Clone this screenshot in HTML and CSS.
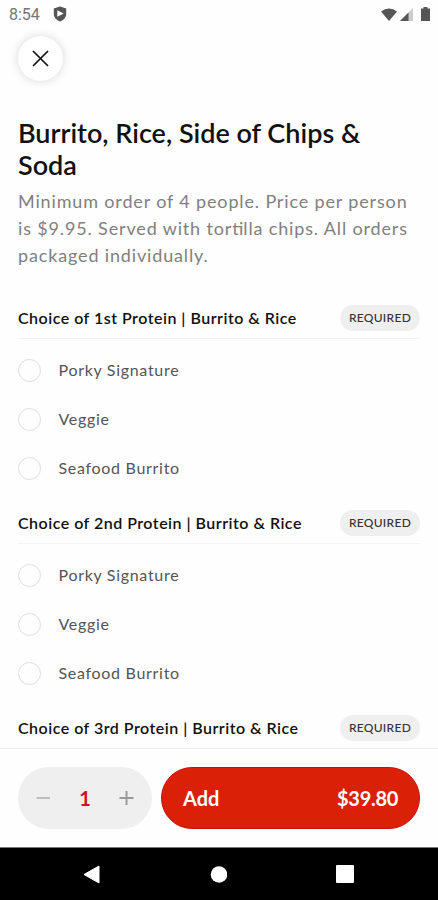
FILE: index.html
```html
<!DOCTYPE html>
<html lang="en">
<head>
<meta charset="utf-8">
<title>Burrito, Rice, Side of Chips &amp; Soda</title>
<link rel="stylesheet" href="styles.css">
</head>
<body>
<div class="screen">
  <header class="status">
    <span class="time">8:54</span>
    <svg class="shield" width="14" height="16" viewBox="0 0 14 16"><path d="M7 .5 13.2 2.5V8C13.2 11.500 10.500 14 7 15.500 3.500 14 .8 11.500 .8 8V2.500Z" fill="#555"/><path d="M4.300 4.300 10.700 7.500 4.300 10.700Z" fill="#fff"/></svg>
    <span class="status-icons">
      <svg width="16" height="13" viewBox="0 0 16 13"><path d="M0 3.500Q8-2.500 16 3.500L8 13Z" fill="#555"/></svg>
      <svg width="13" height="13" viewBox="0 0 13 13"><path d="M13 0V13H0Z" fill="#ccc"/><path d="M8.500 4.500V13H0Z" fill="#555"/></svg>
      <svg class="battery" width="9" height="14" viewBox="0 0 9 14"><path d="M2.500 0h4v1.500H9V14H0V1.500h2.500Z" fill="#555"/></svg>
    </span>
  </header>
  <main class="content">
    <button class="close" aria-label="Close"><svg width="17" height="17" viewBox="0 0 17 17"><path d="M1 1 16 16M16 1 1 16" stroke="#111" stroke-width="1.700" fill="none"/></svg></button>
    <h1>Burrito, Rice, Side of Chips &amp; Soda</h1>
    <p class="description">Minimum order of 4 people. Price per person is $9.95. Served with tor<span class="joined">ti</span>lla chips. All orders packaged individually.</p>
    <section class="group">
      <div class="group-head"><h2>Choice of 1st Protein | Burrito &amp; Rice</h2><span class="badge">REQUIRED</span></div>
      <div class="option"><span class="radio"></span><span>Porky Signature</span></div>
      <div class="option"><span class="radio"></span><span>Veggie</span></div>
      <div class="option"><span class="radio"></span><span>Seafood Burrito</span></div>
    </section>
    <section class="group">
      <div class="group-head"><h2>Choice of 2nd Protein | Burrito &amp; Rice</h2><span class="badge">REQUIRED</span></div>
      <div class="option"><span class="radio"></span><span>Porky Signature</span></div>
      <div class="option"><span class="radio"></span><span>Veggie</span></div>
      <div class="option"><span class="radio"></span><span>Seafood Burrito</span></div>
    </section>
    <section class="group">
      <div class="group-head"><h2>Choice of 3rd Protein | Burrito &amp; Rice</h2><span class="badge">REQUIRED</span></div>
    </section>
  </main>
  <footer class="actions">
    <div class="stepper">
      <svg width="15" height="15" viewBox="0 0 15 15"><path d="M.5 7H14" stroke="#bdbdbd" stroke-width="2"/></svg>
      <span class="count">1</span>
      <svg width="15" height="15" viewBox="0 0 15 15"><path d="M.5 7H14.500M7.500 0V14" stroke="#999" stroke-width="2"/></svg>
    </div>
    <button class="add"><span>Add</span><span class="price">$39.80</span></button>
  </footer>
  <nav class="navbar">
    <svg width="17" height="19" viewBox="0 0 17 19"><path d="M16 1V18L1 9.500Z" fill="#fff" stroke="#fff" stroke-linejoin="round"/></svg>
    <svg width="17" height="17" viewBox="0 0 17 17"><circle cx="8.500" cy="8.500" r="8.300" fill="#fff"/></svg>
    <svg width="18" height="18" viewBox="0 0 18 18"><rect width="18" height="18" rx="1" fill="#fff"/></svg>
  </nav>
</div>
</body>
</html>
```
FILE: styles.css
```css
* { box-sizing: border-box; }
body { margin: 0; background: #fefefe; font-family: Lato, sans-serif; color: #111; }
svg { display: block; flex: none; }
button { border: 0; font: inherit; }
.screen { height: 900px; display: flex; flex-direction: column; overflow: hidden; }
.status { flex: none; height: 28px; padding: 0 8px 0 9px; display: flex; align-items: center; }
.time { font: 16px/28px Roboto, sans-serif; color: #757575; width: 44px; padding-top: 1px; }
.status-icons { margin-left: auto; display: flex; align-items: center; gap: 3px; }
.battery { margin-left: 5px; }
.content { flex: 1; min-height: 0; overflow: hidden; padding: 8px 18px 0; }
.close { display: flex; align-items: center; justify-content: center; width: 45px; height: 45px; padding: 0; border-radius: 50%; background: #fff; box-shadow: 0 0 10px rgba(0, 0, 0, .16); }
h1 { margin: 36px 0 7px; font-size: 27px; line-height: 32px; font-weight: 600; }
.description { margin: 0 0 36px; font-size: 18px; line-height: 27px; letter-spacing: .85px; color: #808080; }
.joined { letter-spacing: 0; }
.group { height: 205px; }
.group-head { height: 34px; display: flex; justify-content: space-between; align-items: flex-start; border-bottom: 1px solid #f2f2f2; margin-bottom: 6px; }
h2 { margin: 0; font-size: 16px; line-height: 26px; font-weight: 600; letter-spacing: .49px; }
.badge { width: 80px; height: 26px; border-radius: 13px; background: #efefef; text-align: center; font-size: 12px; line-height: 26px; font-weight: 500; letter-spacing: .3px; color: #333; }
.option { height: 49px; display: flex; align-items: center; gap: 17.5px; font-size: 16px; letter-spacing: .7px; color: #555; }
.radio { width: 23px; height: 23px; margin-top: 2px; border: 1px solid #dedede; border-radius: 50%; }
.actions { flex: none; height: 99px; padding: 18px 18px 0; display: flex; gap: 9px; border-top: 1px solid #eee; }
.stepper { width: 134px; height: 62px; border-radius: 31px; background: #efefef; display: flex; align-items: center; justify-content: space-between; padding: 0 18px; }
.count { color: #cf1515; font-size: 20px; font-weight: 700; }
.add { flex: 1; height: 62px; border-radius: 31px; padding: 0 21px; background: #db2008; border: 1px solid #d00c08; color: #fff; font-size: 20px; font-weight: 700; display: flex; justify-content: space-between; align-items: center; }
.price { letter-spacing: -.3px; }
.navbar { flex: none; height: 53px; background: #000; border-top: 1px solid #777; display: flex; align-items: center; justify-content: space-between; padding: 0 84px 0 83px; }
.navbar circle { transform: translateX(.5px); }
```
